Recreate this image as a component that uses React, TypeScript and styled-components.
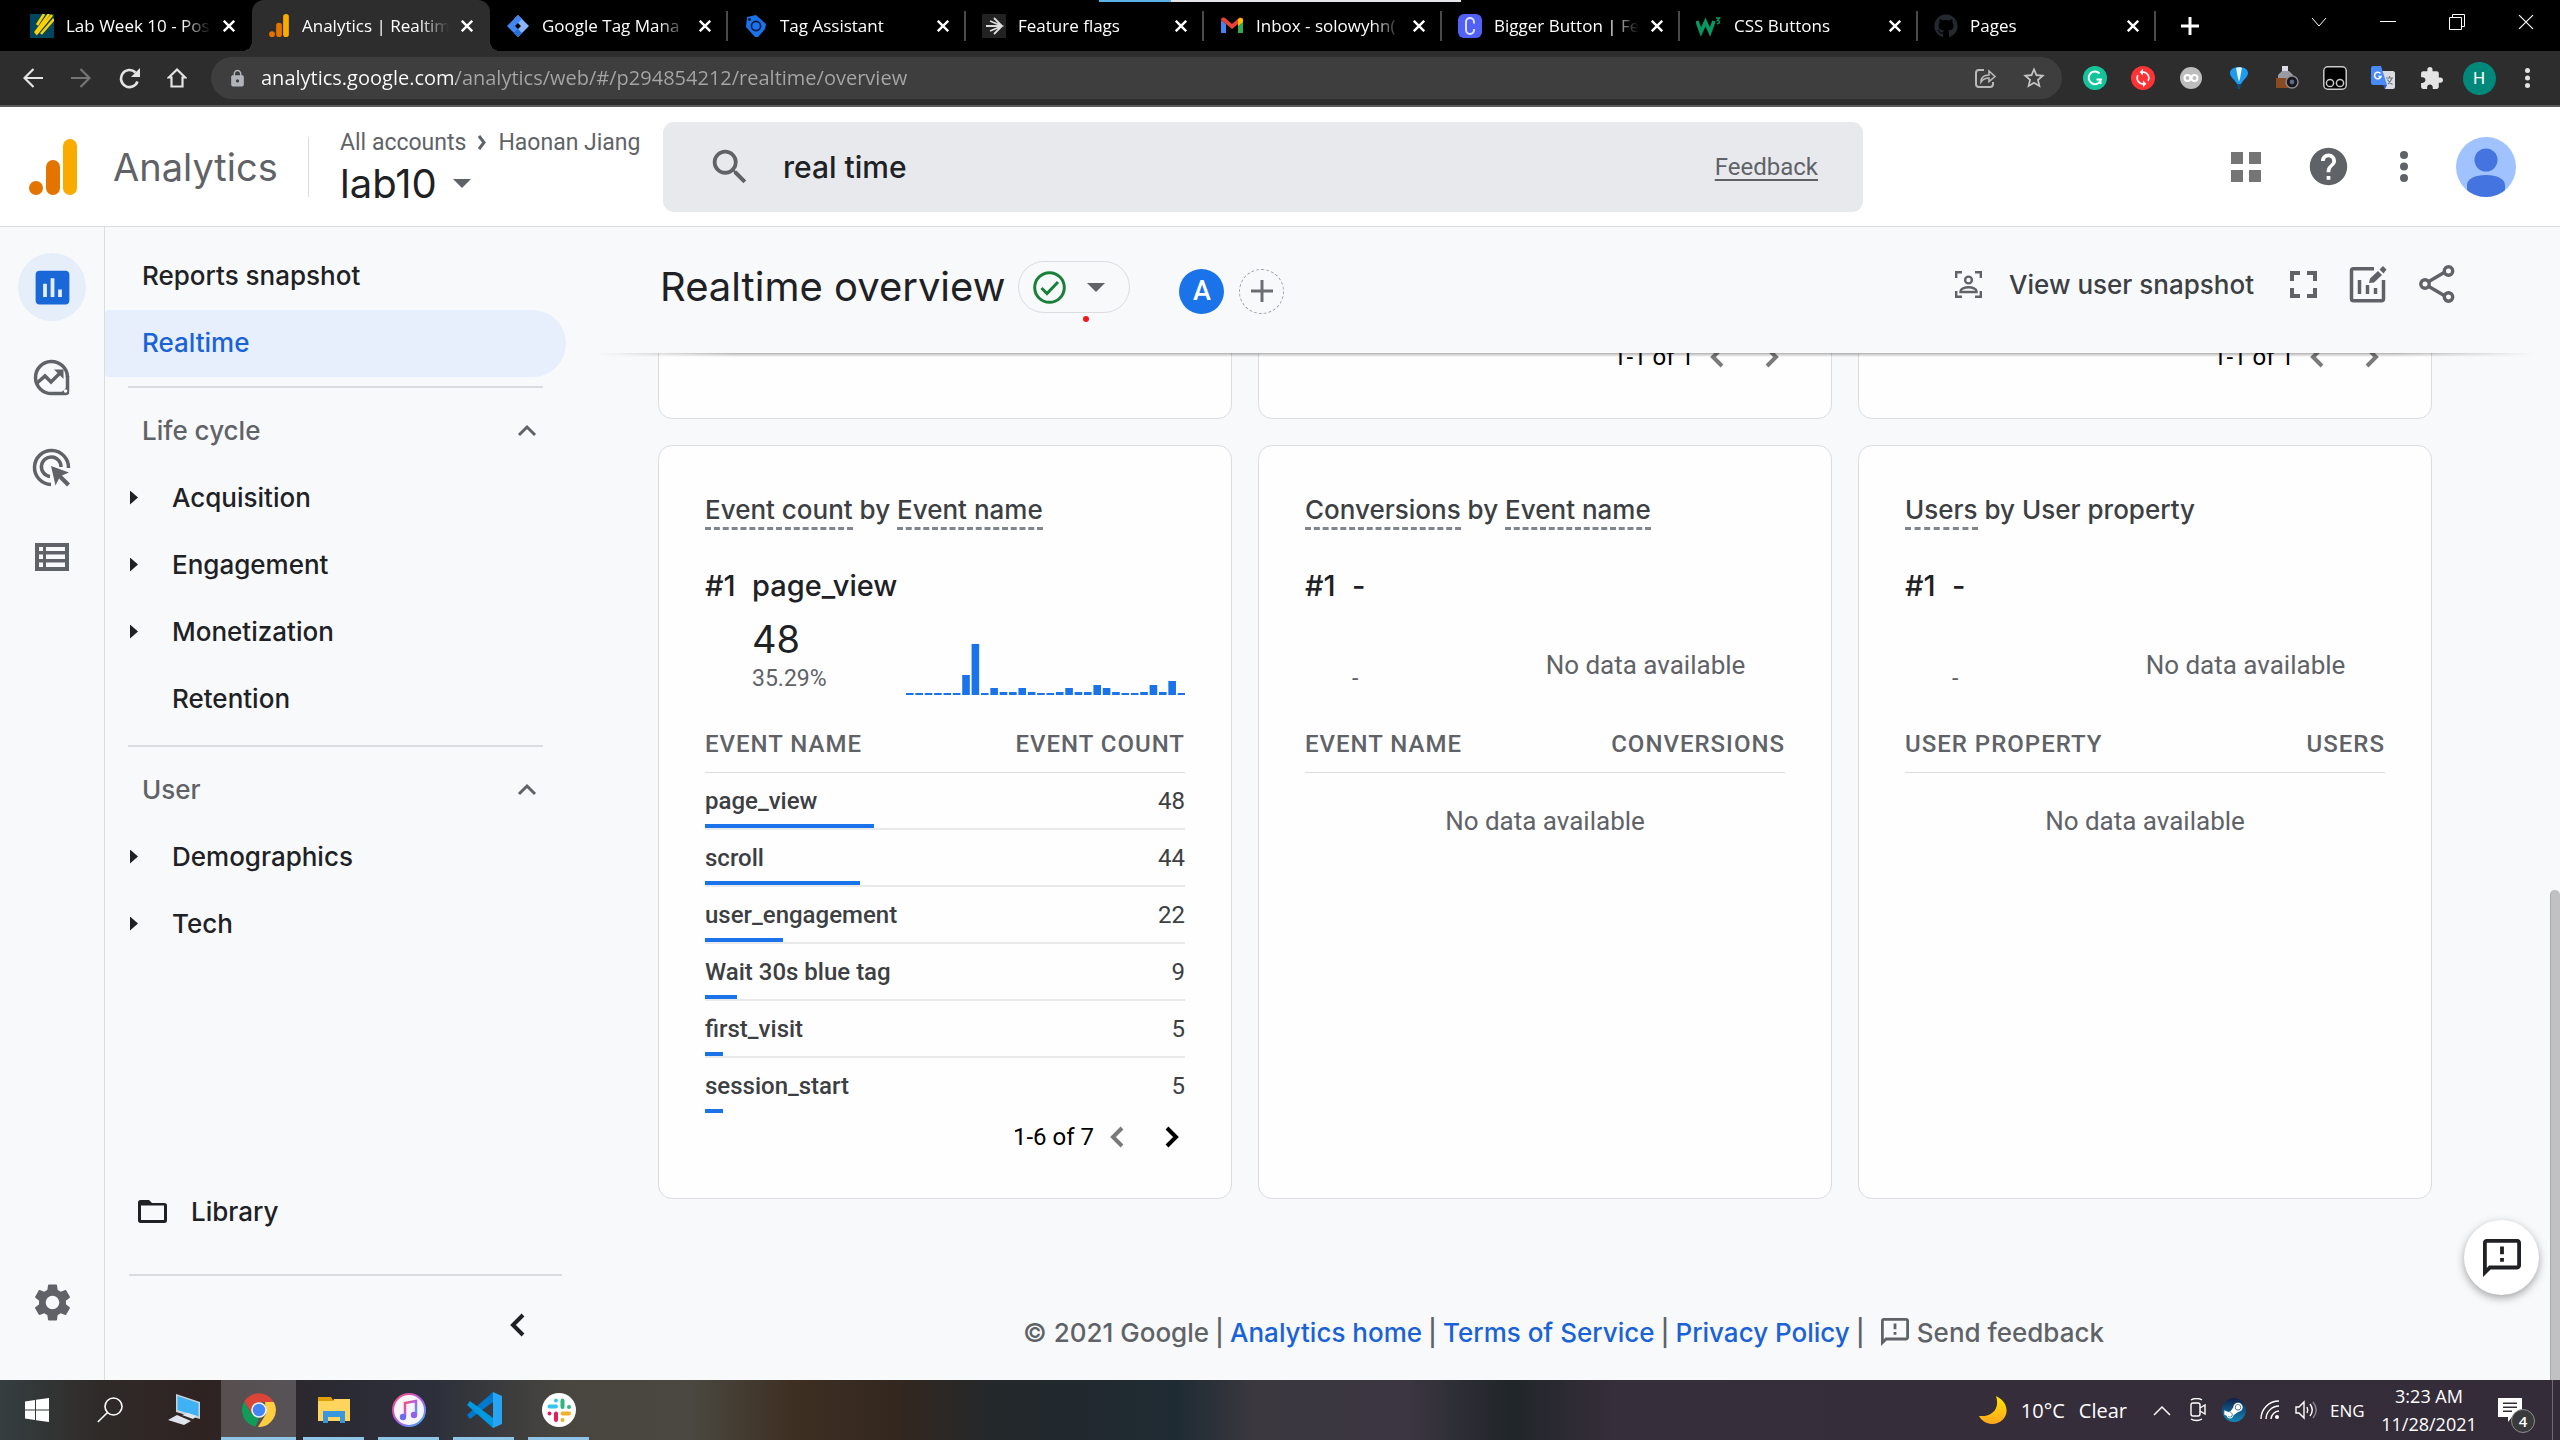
import React from "react";
import styled, { createGlobalStyle, css } from "styled-components";
import { MdSearch, MdHelp, MdSettings, MdInsertChart, MdLock, MdExtension, MdStarBorder, MdSync } from "react-icons/md";
import { FaGithub, FaSteamSymbol } from "react-icons/fa";

const display = `Inter, "Noto Sans", sans-serif`;
const body = `Roboto, "Noto Sans", sans-serif`;
const system = `"Open Sans", "Noto Sans", sans-serif`;

const GlobalStyle = createGlobalStyle`
  * { box-sizing: border-box; }
  body { margin: 0; overflow: hidden; background: #f8f9fb; }
  button, input { font: inherit; color: inherit; margin: 0; }
  button { border: 0; padding: 0; background: none; cursor: pointer; text-align: left; }
  svg { display: block; flex: none; }
  ul { list-style: none; margin: 0; padding: 0; }
`;

const Screen = styled.div`
  display: flex;
  flex-direction: column;
  height: 100vh;
  font-family: ${body};
  font-size: 24px;
  color: #202124;
`;

/* ---------- browser chrome ---------- */

const TabStrip = styled.div`
  position: relative;
  display: flex;
  flex: none;
  height: 51px;
  padding-left: 14px;
  background: #000;
  color: #fff;
  font-family: ${system};
  font-size: 17px;
`;

const Tab = styled.div<{ $active?: boolean; $divider?: boolean }>`
  position: relative;
  display: flex;
  align-items: center;
  gap: 12px;
  flex: 0 1 238px;
  min-width: 0;
  padding: 0 17px 0 16px;
  ${(p) =>
    p.$divider &&
    css`
      background: linear-gradient(#4a4a4a, #4a4a4a) right center / 2px 30px no-repeat;
    `}
  ${(p) =>
    p.$active &&
    css`
      background: #2d2d2d;
      border-radius: 12px 12px 0 0;
      &::before,
      &::after {
        content: "";
        position: absolute;
        bottom: 0;
        width: 10px;
        height: 10px;
      }
      &::before {
        left: -10px;
        background: radial-gradient(circle at 0 0, transparent 10px, #2d2d2d 10px);
      }
      &::after {
        right: -10px;
        background: radial-gradient(circle at 100% 0, transparent 10px, #2d2d2d 10px);
      }
    `}
`;

const TabTitle = styled.button`
  flex: 1;
  min-width: 0;
  white-space: nowrap;
  line-height: 30px;
  mask-image: linear-gradient(to right, #000 80%, transparent);
`;

const IconButton = styled.button`
  display: flex;
  align-items: center;
  justify-content: center;
  flex: none;
`;

const NewTab = styled(IconButton)`
  width: 68px;
`;

const WindowControls = styled.div`
  display: flex;
  height: 43px;
  margin-left: auto;
  button {
    width: 69px;
  }
`;

const LoadingHandle = styled.div`
  position: absolute;
  top: 0;
  left: 1099px;
  width: 362px;
  height: 2px;
  background: linear-gradient(to right, #5ab3e6 72px, #e4e6ea 72px);
`;

const Toolbar = styled.div`
  display: flex;
  align-items: center;
  flex: none;
  height: 56px;
  padding: 0 9px;
  background: #2d2d2d;
  border-bottom: 2px solid #5a5a5a;
  color: #e4e4e4;
`;

const ToolButton = styled(IconButton)`
  width: 48px;
  height: 42px;
`;

const AddressBar = styled.label`
  display: flex;
  align-items: center;
  flex: 1;
  height: 42px;
  margin: 0 9px 0 10px;
  padding: 0 4px 0 17px;
  border-radius: 21px;
  background: #3e3e3e;
`;

const UrlInput = styled.input`
  flex: 1;
  margin-left: 14px;
  padding: 0;
  border: 0;
  outline: 0;
  font-family: ${system};
  font-size: 20px;
  line-height: 30px;
  color: transparent;
  background: linear-gradient(to right, #fff 195px, #a6a6a6 195px);
  background-clip: text;
  -webkit-background-clip: text;
`;

const ProfileDot = styled.span`
  display: grid;
  place-items: center;
  width: 33px;
  height: 33px;
  border-radius: 50%;
  background: #00897b;
  color: #fff;
  font-size: 17px;
`;

/* ---------- analytics header ---------- */

const AppHeader = styled.header`
  display: flex;
  align-items: center;
  flex: none;
  height: 120px;
  padding: 0 44px 0 29px;
  background: #fff;
  border-bottom: 1px solid #dadce0;
`;

const Brand = styled.span`
  width: 195px;
  margin-left: 36px;
  font-family: ${display};
  font-size: 38px;
  color: #5f6368;
`;

const AccountPicker = styled.div`
  width: 355px;
  height: 60px;
  padding-left: 31px;
  border-left: 1px solid #dadce0;
  display: flex;
  flex-direction: column;
  justify-content: center;
`;

const Crumbs = styled.nav`
  display: flex;
  align-items: center;
  gap: 11px;
  font-size: 23px;
  line-height: 34px;
  color: #5f6368;
  white-space: nowrap;
`;

const PropertyButton = styled.button`
  display: flex;
  align-items: center;
  gap: 16px;
  font-family: ${display};
  font-size: 40px;
  line-height: 48px;
`;

const SearchBox = styled.label`
  display: flex;
  align-items: center;
  width: 1200px;
  height: 90px;
  padding: 0 45px 0 44px;
  border-radius: 11px;
  background: #e8e9ed;
  color: #5f6368;
`;

const SearchInput = styled.input`
  flex: 1;
  min-width: 0;
  margin-left: 30px;
  padding: 0;
  border: 0;
  outline: 0;
  background: none;
  font-family: ${display};
  font-size: 30px;
  font-weight: 500;
  color: #202124;
`;

const FeedbackLink = styled.a`
  color: #5f6368;
  text-underline-offset: 4px;
`;

const HeaderActions = styled.div`
  display: flex;
  align-items: center;
  margin-left: auto;
  color: #5f6368;
`;

const HelpButton = styled(IconButton)`
  margin: 0 49px 0 45px;
`;

const AvatarButton = styled(IconButton)`
  margin-left: 48px;
`;

/* ---------- navigation ---------- */

const Workspace = styled.div`
  position: relative;
  display: flex;
  flex: 1;
  min-height: 0;
  background: #f8f9fb;
`;

const Rail = styled.nav`
  display: flex;
  flex-direction: column;
  align-items: center;
  gap: 22px;
  width: 105px;
  padding: 26px 0 44px;
  border-right: 1px solid #dadce0;
  color: #5f6368;
`;

const RailButton = styled(IconButton)<{ $active?: boolean; $last?: boolean }>`
  width: 68px;
  height: 68px;
  border-radius: 50%;
  background: ${(p) => (p.$active ? "#e6eefa" : "none")};
  color: ${(p) => (p.$active ? "#1a68d8" : "inherit")};
  margin-top: ${(p) => (p.$last ? "auto" : 0)};
`;

const SideNav = styled.nav`
  display: flex;
  flex-direction: column;
  width: 462px;
  padding-top: 16px;
  font-family: ${display};
  font-size: 26px;
  font-weight: 500;
`;

const NavLink = styled.a<{ $selected?: boolean }>`
  display: flex;
  align-items: center;
  height: 67px;
  margin-right: 1px;
  padding: 0 0 3px 37px;
  border-radius: 4px 34px 34px 4px;
  text-decoration: none;
  color: ${(p) => (p.$selected ? "#1a63d6" : "#202124")};
  background: ${(p) => (p.$selected ? "#e8effc" : "none")};
`;

const NavRule = styled.hr<{ $wide?: boolean }>`
  width: ${(p) => (p.$wide ? "auto" : "415px")};
  margin: ${(p) => (p.$wide ? "29px 5px 0 24px" : "9px 0 9px 23px")};
  border: 0;
  border-top: 2px solid #dadce0;
`;

const SectionToggle = styled.button`
  display: flex;
  align-items: center;
  justify-content: space-between;
  height: 67px;
  padding: 0 30px 0 37px;
  color: #5f6368;
`;

const SectionList = styled.ul`
  padding-bottom: 4px;
`;

const SectionItem = styled.a`
  display: flex;
  align-items: center;
  height: 67px;
  padding-left: 25px;
  color: #202124;
  text-decoration: none;
`;

const Caret = styled.span<{ $hidden?: boolean }>`
  width: 8px;
  height: 14px;
  margin-right: 34px;
  background: ${(p) => (p.$hidden ? "none" : "#202124")};
  clip-path: polygon(0 0, 100% 50%, 0 100%);
`;

const NavFooter = styled.div`
  margin-top: auto;
`;

const LibraryLink = styled.a`
  display: flex;
  align-items: center;
  gap: 24px;
  height: 67px;
  padding-left: 33px;
  color: #202124;
  text-decoration: none;
`;

const CollapseRow = styled.div`
  display: flex;
  align-items: center;
  justify-content: flex-end;
  height: 104px;
  padding: 0 42px 6px 0;
`;

/* ---------- report ---------- */

const Main = styled.main`
  display: flex;
  flex-direction: column;
  flex: 1;
  min-width: 0;
`;

const ReportHeader = styled.div`
  position: relative;
  z-index: 1;
  display: flex;
  align-items: center;
  flex: none;
  height: 126px;
  padding: 0 105px 6px 93px;
  background: #f8f9fb;
  &::after {
    content: "";
    position: absolute;
    left: 30px;
    right: 26px;
    top: 100%;
    height: 4px;
    background: linear-gradient(rgba(0, 0, 0, 0.3), rgba(0, 0, 0, 0));
    mask-image: linear-gradient(to right, transparent, #000 140px, #000 calc(100% - 140px), transparent);
  }
`;

const ReportTitle = styled.h1`
  margin: 0 13px 0 0;
  font-family: ${display};
  font-size: 40px;
  font-weight: 400;
  line-height: 52px;
  white-space: nowrap;
`;

const StatusButton = styled.button`
  position: relative;
  display: flex;
  align-items: center;
  justify-content: space-between;
  width: 112px;
  height: 52px;
  padding: 0 24px 0 14px;
  border: 1px solid #dadce0;
  border-radius: 26px;
`;

const StatusMark = styled.span`
  position: absolute;
  left: 64px;
  top: 54px;
  width: 6px;
  height: 6px;
  border-radius: 50%;
  background: #f01818;
`;

const Comparisons = styled.div`
  display: flex;
  gap: 15px;
  margin: 8px 0 0 49px;
`;

const ComparisonChip = styled(IconButton)<{ $add?: boolean }>`
  width: 45px;
  height: 45px;
  border-radius: 50%;
  font-size: 27px;
  font-weight: 500;
  color: ${(p) => (p.$add ? "#6b6f73" : "#fff")};
  background: ${(p) => (p.$add ? "none" : "#1a73e8")};
  border: ${(p) => (p.$add ? "1px dashed #9aa0a6" : "0")};
`;

const ReportActions = styled.div`
  display: flex;
  align-items: center;
  gap: 32px;
  margin-left: auto;
  padding-bottom: 6px;
  color: #5f6368;
`;

const SnapshotButton = styled.button`
  display: flex;
  align-items: center;
  gap: 27px;
  margin-right: 4px;
  font-family: ${display};
  font-size: 26px;
  font-weight: 500;
  white-space: nowrap;
  span {
    color: #3c4043;
  }
`;

const CardRow = styled.div<{ $clipped?: boolean }>`
  display: grid;
  grid-template-columns: repeat(3, minmax(0, 1fr));
  gap: 26px;
  padding: 0 128px 0 91px;
  ${(p) =>
    p.$clipped &&
    css`
      align-items: end;
      align-content: end;
      height: 66px;
      margin-bottom: 26px;
      overflow: hidden;
    `}
`;

const Card = styled.section`
  display: flex;
  flex-direction: column;
  min-height: 126px;
  padding: 46px 46px 44px;
  border: 1px solid #dadce0;
  border-radius: 14px;
  background: #fefefe;
`;

const CardTitle = styled.h2`
  margin: 0 0 38px;
  font-family: ${display};
  font-size: 26px;
  font-weight: 500;
  line-height: 36px;
  color: #3c4043;
  white-space: nowrap;
`;

const Term = styled.span`
  padding-bottom: 2px;
  border-bottom: 3px dashed #80868b;
`;

const TopItem = styled.div`
  display: grid;
  grid-template-columns: 47px 1fr;
  font-family: ${display};
  font-size: 29px;
  font-weight: 500;
  line-height: 40px;
`;

const Hero = styled.div`
  display: flex;
  justify-content: space-between;
  align-items: flex-end;
  height: 89px;
  padding-left: 47px;
`;

const Metric = styled.div`
  font-family: ${display};
  font-size: 38px;
  line-height: 48px;
`;

const Share = styled.div`
  font-size: 23px;
  line-height: 32px;
  color: #5f6368;
`;

const HeroSide = styled.div`
  display: flex;
  justify-content: center;
  width: 279px;
`;

const Empty = styled.p<{ $hero?: boolean }>`
  margin: 0;
  font-size: 26px;
  line-height: ${(p) => (p.$hero ? "60px" : "94px")};
  text-align: center;
  color: #5f6368;
`;

const DataTable = styled.table`
  width: 100%;
  margin-top: 21px;
  border-collapse: separate;
  border-spacing: 0;
  table-layout: fixed;
  th {
    height: 57px;
    padding: 0;
    border-bottom: 1px solid #dadce0;
    font-weight: 500;
    letter-spacing: 1px;
    text-align: left;
    color: #5f6368;
    white-space: nowrap;
  }
  th:last-child,
  td:last-child {
    text-align: right;
  }
`;

const NameCol = styled.col`
  width: 60%;
`;

const Cell = styled.td<{ $strong?: boolean }>`
  height: 57px;
  padding: 6px 0 0;
  border-bottom: 2px solid #e8e9ea;
  vertical-align: top;
  line-height: 45px;
  color: #3c4043;
  font-weight: ${(p) => (p.$strong ? 500 : 400)};
  tr:last-child > & {
    border-color: transparent;
  }
`;

const Bar = styled.div`
  height: 4px;
  background: #1a73e8;
`;

const Pager = styled.div`
  display: flex;
  align-items: center;
  justify-content: flex-end;
  height: 39px;
  padding-top: 5px;
  margin-top: auto;
  color: #000;
  button {
    width: 26px;
    color: #000;
  }
  button:disabled {
    color: #7a7a7a;
  }
  button:first-of-type {
    margin: 0 29px 0 10px;
  }
`;

const Footer = styled.footer`
  display: flex;
  align-items: center;
  justify-content: center;
  flex: none;
  height: 180px;
  padding-top: 86px;
  gap: 6px;
  font-family: ${display};
  font-size: 26px;
  font-weight: 500;
  color: #5f6368;
  white-space: nowrap;
  a {
    color: #1a62d6;
    text-decoration: none;
  }
`;

const SendFeedback = styled.button`
  display: flex;
  align-items: center;
  gap: 8px;
  margin-left: 10px;
`;

const FloatingFeedback = styled(IconButton)`
  position: absolute;
  right: 21px;
  bottom: 85px;
  width: 75px;
  height: 75px;
  border-radius: 50%;
  background: #fff;
  box-shadow: 0 3px 9px rgba(0, 0, 0, 0.35);
`;

const ScrollThumb = styled.div`
  position: absolute;
  right: 0;
  bottom: 0;
  width: 10px;
  height: 490px;
  border-radius: 5px 5px 0 0;
  border-left: 1px solid #a9a9a9;
  background: #c1c1c3;
`;

/* ---------- taskbar ---------- */

const Taskbar = styled.div`
  position: relative;
  display: flex;
  flex: none;
  height: 60px;
  color: #fff;
  font-family: ${system};
  font-size: 17px;
  background: linear-gradient(
    to right,
    #353e40 0,
    #2f2a28 4%,
    #2f2322 8%,
    #2b2a33 13%,
    #2d303b 17%,
    #48463f 22%,
    #4a4840 27%,
    #3e2f22 31%,
    #33271f 35%,
    #23282b 39%,
    #1f2b33 46%,
    #3b3840 49%,
    #3b3641 55%,
    #20262a 59%,
    #362e3a 63%,
    #352c3a 100%
  );
`;

const TaskButton = styled(IconButton)<{ $running?: boolean; $active?: boolean; $narrow?: boolean }>`
  width: ${(p) => (p.$narrow ? "73px" : "75px")};
  border-top: 3px solid transparent;
  border-bottom: 3px solid transparent;
  background: ${(p) =>
    p.$active
      ? "linear-gradient(#8ec5e6, #8ec5e6) center bottom / 100% 3px no-repeat border-box, rgba(255,255,255,0.2) border-box"
      : p.$running
      ? "linear-gradient(#8ec5e6, #8ec5e6) center bottom / 61px 3px no-repeat border-box"
      : "none"};
`;

const Tray = styled.div`
  display: flex;
  align-items: center;
  margin-left: auto;
  padding-right: 25px;
`;

const Weather = styled.button`
  display: flex;
  align-items: center;
  gap: 14px;
  margin-right: 17px;
  font-size: 20px;
`;

const TrayButton = styled(IconButton)`
  width: 36px;
  height: 48px;
`;

const Clock = styled.time`
  width: 110px;
  margin: 0 14px 0 6px;
  text-align: center;
  font-size: 18px;
  line-height: 28px;
`;

const Language = styled.button`
  width: 38px;
  margin-left: 6px;
`;

const Notices = styled(IconButton)`
  position: relative;
  justify-content: flex-start;
  width: 37px;
  height: 48px;
`;

const NoticeCount = styled.span`
  position: absolute;
  right: 0;
  bottom: 1px;
  display: grid;
  place-items: center;
  width: 24px;
  height: 24px;
  border: 1px solid #8d8d8d;
  border-radius: 50%;
  background: #3a3a3c;
  font-size: 15px;
  font-weight: 600;
`;

const DesktopEdge = styled.div`
  position: absolute;
  right: 7px;
  top: 0;
  width: 1px;
  height: 100%;
  background: #6f6a74;
`;

/* ---------- drawings ---------- */

const Cross = ({ size = 12, width = 2.4 }: { size?: number; width?: number }) => (
  <svg width={size} height={size} viewBox="0 0 12 12" stroke="currentColor" strokeWidth={width} fill="none">
    <path d="M.8.8l10.4 10.4M11.2.8L.8 11.2" />
  </svg>
);

const Chevron = ({ dir, w = 14, h = 22, sw = 4 }: { dir: "left" | "right" | "up"; w?: number; h?: number; sw?: number }) => {
  const pts =
    dir === "left"
      ? `${w - 2},2 3,${h / 2} ${w - 2},${h - 2}`
      : dir === "right"
      ? `2,2 ${w - 3},${h / 2} 2,${h - 2}`
      : `2,${h - 2} ${w / 2},3 ${w - 2},${h - 2}`;
  return (
    <svg width={w} height={h} fill="none" stroke="currentColor" strokeWidth={sw}>
      <polyline points={pts} />
    </svg>
  );
};

const DownArrow = ({ w = 18 }: { w?: number }) => (
  <svg width={w} height={w / 2} viewBox="0 0 18 9" fill="#5f6368">
    <path d="M0 0h18L9 9z" />
  </svg>
);

const AnalyticsLogo = ({ w = 48, h = 56 }: { w?: number; h?: number }) => (
  <svg width={w} height={h} viewBox="0 0 48 56">
    <rect x="34" y="0" width="14" height="56" rx="7" fill="#f9ab00" />
    <rect x="17" y="21" width="14" height="35" rx="7" fill="#e37400" />
    <circle cx="7" cy="49" r="7" fill="#e37400" />
  </svg>
);

const PolyIcon = () => (
  <svg width="24" height="24" viewBox="0 0 24 24">
    <path fill="#00465f" d="M0 0h24v24H0z" />
    <path d="M7 11L14 0M5 19L19 0M6 20.500L22 1M11 20L24 5" stroke="#ffd100" strokeWidth="2.6" />
  </svg>
);

const TagManagerIcon = () => (
  <svg width="24" height="24" viewBox="0 0 24 24">
    <path fill="#8ab4f8" d="M12 1l11 11-11 11-4-4 7-7-7-7z" />
    <path fill="#4285f4" d="M12 1L1 12l7 7 4-4-3-3 7-7z" />
    <path fill="#246fdb" d="M8 19l4-4 4 4-4 4z" />
  </svg>
);

const TagAssistantIcon = () => (
  <svg width="24" height="24" viewBox="0 0 24 24">
    <path fill="#1a73e8" d="M3 3l9-2 10 9-1 5-7 8h-3L2 13z" />
    <circle cx="12" cy="12" r="4.600" fill="none" stroke="#06183a" strokeWidth="1.600" />
    <circle cx="5.500" cy="5.500" r="1.400" fill="#06183a" />
  </svg>
);

const FlagsIcon = () => (
  <svg width="24" height="24" viewBox="0 0 24 24" stroke="#ddd" strokeWidth="1.8" fill="none">
    <path fill="#222" stroke="none" d="M0 0h24v24H0z" />
    <path d="M4 12h16M12 4l8 8-8 8M8 7l12 5-12 5" />
  </svg>
);

const GmailIcon = () => (
  <svg width="24" height="24" viewBox="0 0 24 24">
    <path fill="#4285f4" d="M1 6v13h5v-9z" />
    <path fill="#34a853" d="M23 6v13h-5v-9z" />
    <path fill="#ea4335" d="M1 6c0-2 2-3 4-2l7 6 7-6c2-1 4 0 4 2l-5 4-6 5-6-5z" />
    <path fill="#fbbc04" d="M18 5c3-2 5-1 5 1v2l-5 4z" />
  </svg>
);

const CodeIcon = () => (
  <svg width="24" height="24" viewBox="0 0 24 24" fill="none">
    <rect width="24" height="24" rx="6" fill="#5161f5" />
    <path d="M16 9.500V8a4 4 0 0 0-8 0v8a4 4 0 0 0 8 0v-1" stroke="#dfe2ff" strokeWidth="2" />
  </svg>
);

const SchoolsIcon = () => (
  <svg width="26" height="24" viewBox="0 0 26 24" fill="none" stroke="#059862">
    <path d="M1 7l4 11 4.500-10 4.500 10 4-11" strokeWidth="3.600" />
    <path d="M20 4h3.500l-2 2.500c3 0 2.500 3.500-.5 3.200" strokeWidth="1.500" />
  </svg>
);

const Avatar = () => (
  <svg width="60" height="60" viewBox="0 0 60 60">
    <defs>
      <clipPath id="avatar-clip">
        <circle cx="30" cy="30" r="30" />
      </clipPath>
    </defs>
    <circle cx="30" cy="30" r="30" fill="#a0c3ff" />
    <g clipPath="url(#avatar-clip)" fill="#4374e0">
      <circle cx="30" cy="23" r="11.500" />
      <path d="M11 60V48c0-6 8-10 19-10s19 4 19 10v12z" />
    </g>
  </svg>
);

const Apps = () => (
  <svg width="30" height="30" viewBox="0 0 30 30" fill="#757575">
    <path d="M0 0h12v12H0zM18 0h12v12H18zM0 18h12v12H0zM18 18h12v12H18z" />
  </svg>
);

const Dots = ({ r = 4, h = 31 }: { r?: number; h?: number }) => (
  <svg width={r * 2} height={h} fill="currentColor">
    <circle cx={r} cy={r} r={r} />
    <circle cx={r} cy={h / 2} r={r} />
    <circle cx={r} cy={h - r} r={r} />
  </svg>
);

const ExploreIcon = () => (
  <svg width="38" height="38" viewBox="0 0 38 38" fill="none" stroke="currentColor">
    <path d="M34.500 19A16 16 0 1 0 19 35.500" strokeWidth="3.500" />
    <path d="M34.500 18v15.500c0 1-.8 2-2 2H19" strokeWidth="3.500" />
    <path d="M36 24v12H24c6-2 10-6 12-12z" fill="currentColor" stroke="none" />
    <circle cx="32.500" cy="33" r="1.800" fill="#fff" stroke="none" />
    <path d="M4 25l8-7 6 6 9-9" strokeWidth="3.500" />
    <path d="M21 11.500h9.500V21z" fill="currentColor" stroke="none" />
  </svg>
);

const AdvertisingIcon = () => (
  <svg width="40" height="40" viewBox="0 0 40 40" fill="none" stroke="currentColor" strokeWidth="3.500">
    <path d="M19 37.500A17 17 0 1 1 36.500 21" />
    <path d="M18 29.500A9.800 9.800 0 1 1 29 20" />
    <path d="M19 19l18 6.500-7 3 8 8-3 3-8-8-3.500 7z" fill="currentColor" stroke="none" />
  </svg>
);

const ConfigureIcon = () => (
  <svg width="34" height="28" viewBox="0 0 34 28">
    <path
      fill="currentColor"
      fillRule="evenodd"
      d="M0 0h34v28H0zM4 4v4h4V4zM11 4v4h19V4zM4 11.500v4.500h4v-4.500zM11 11.500v4.500h19v-4.500zM4 19.500V24h4v-4.500zM11 19.500V24h19v-4.500z"
    />
  </svg>
);

const FolderIcon = () => (
  <svg width="29" height="23" viewBox="0 0 29 23">
    <path
      fill="#202124"
      fillRule="evenodd"
      d="M2.500 0H11l3 3h12.500C28 3 29 4 29 5.500v15c0 1.500-1 2.500-2.500 2.500h-24C1 23 0 22 0 20.500v-18C0 1 1 0 2.500 0zM3 5.500V20h23V5.500z"
    />
  </svg>
);

const CheckIcon = () => (
  <svg width="33" height="33" viewBox="0 0 33 33" fill="none" stroke="#188038" strokeWidth="3">
    <circle cx="16.500" cy="16.500" r="14.800" />
    <path d="M8.500 17l5.500 5.500L25 11" />
  </svg>
);

const PlusIcon = ({ s = 22, w = 3 }: { s?: number; w?: number }) => (
  <svg width={s} height={s} viewBox="0 0 22 22" fill="none" stroke="currentColor" strokeWidth={w}>
    <path d="M11 0v22M0 11h22" />
  </svg>
);

const SnapshotIcon = () => (
  <svg width="27" height="27" viewBox="0 0 27 27" fill="none" stroke="currentColor" strokeWidth="2.400">
    <path d="M1.200 7V1.200H7M20 1.200h5.800V7M25.800 20v5.800H20M7 25.800H1.200V20" />
    <circle cx="13.500" cy="9" r="3.400" />
    <path d="M5.500 21v-1c0-2 4-3.800 8-3.800s8 1.800 8 3.800v1z" />
  </svg>
);

const FullscreenIcon = () => (
  <svg width="27" height="27" viewBox="0 0 27 27" fill="none" stroke="currentColor" strokeWidth="4">
    <path d="M2 10V2h8M17 2h8v8M25 17v8h-8M10 25H2v-8" />
  </svg>
);

const CustomizeIcon = () => (
  <svg width="38" height="38" viewBox="0 0 38 38" fill="none" stroke="currentColor" strokeWidth="3.500">
    <path d="M25 3.800H4.500a2 2 0 0 0-2 2v28a2 2 0 0 0 2 2h28a2 2 0 0 0 2-2V15" />
    <path d="M10.500 15v14M18.500 20v9M26.500 23v6" />
    <path d="M20 18l1-4.500L29 6l4 4-8 7.500zM30.500 4.500L34 1l3.500 3.500L34.500 8.500z" fill="currentColor" stroke="none" />
  </svg>
);

const ShareIcon = () => (
  <svg width="36" height="38" viewBox="0 0 36 38" fill="none" stroke="currentColor" strokeWidth="3.400">
    <path d="M9 17L26 7M9 21l17 10" />
    <circle cx="6" cy="19" r="4.200" />
    <circle cx="29.500" cy="6" r="4.200" />
    <circle cx="29.500" cy="32" r="4.200" />
  </svg>
);

const FeedbackIcon = ({ s }: { s: number }) => (
  <svg width={s} height={s} viewBox="0 0 20 20" fill="currentColor">
    <path d="M18 0H2C.9 0 0 .9 0 2v18l4-4h14c1.100 0 2-.9 2-2V2c0-1.100-.9-2-2-2zm0 14H3.200L2 15.200V2h16v12zM9 10h2v2H9zM9 4h2v4H9z" />
  </svg>
);

const bars = [2, 2, 2, 2, 2, 2, 20, 51, 2, 7, 3, 3, 7, 3, 2, 2, 3, 7, 3, 3, 10, 7, 3, 2, 2, 3, 10, 3, 14, 2];

const Sparkline = () => (
  <svg width="279" height="54" fill="#1a73e8" role="img" aria-label="Events per minute">
    {bars.map((v, i) => (
      <rect key={i} x={i * 9.37} y={54 - v} width="7.6" height={v} />
    ))}
  </svg>
);

/* ---------- data ---------- */

const tabs = [
  { title: "Lab Week 10 - Pos", icon: <PolyIcon /> },
  { title: "Analytics | Realtim", icon: <AnalyticsLogo w={22} h={23} />, active: true },
  { title: "Google Tag Mana", icon: <TagManagerIcon />, divider: true },
  { title: "Tag Assistant", icon: <TagAssistantIcon />, divider: true },
  { title: "Feature flags", icon: <FlagsIcon />, divider: true },
  { title: "Inbox - solowyhn(", icon: <GmailIcon />, divider: true },
  { title: "Bigger Button | Fe", icon: <CodeIcon />, divider: true },
  { title: "CSS Buttons", icon: <SchoolsIcon />, divider: true },
  { title: "Pages", icon: <FaGithub size={24} color="#24292f" />, divider: true },
];

const sections = [
  {
    name: "Life cycle",
    items: [
      { name: "Acquisition", open: true },
      { name: "Engagement", open: true },
      { name: "Monetization", open: true },
      { name: "Retention", open: false },
    ],
  },
  {
    name: "User",
    items: [
      { name: "Demographics", open: true },
      { name: "Tech", open: true },
    ],
  },
];

const events = [
  { name: "page_view", count: 48 },
  { name: "scroll", count: 44 },
  { name: "user_engagement", count: 22 },
  { name: "Wait 30s blue tag", count: 9 },
  { name: "first_visit", count: 5 },
  { name: "session_start", count: 5 },
];
const totalEvents = 136;

const extensions = [
  {
    name: "Grammarly",
    icon: (
      <svg width="24" height="24" viewBox="0 0 24 24" fill="none" stroke="#fff" strokeWidth="2">
        <circle cx="12" cy="12" r="12" fill="#15c39a" stroke="none" />
        <path d="M16.500 7.500a6.300 6.300 0 1 0 1.500 6h-4.500M17.500 18v-4.500" />
      </svg>
    ),
  },
  {
    name: "Sync",
    icon: (
      <svg width="24" height="24" viewBox="0 0 24 24">
        <circle cx="12" cy="12" r="12" fill="#f33" />
        <g transform="translate(2 2)" stroke="#fff" strokeWidth="1.500">
          <MdSync size={20} color="#fff" />
        </g>
      </svg>
    ),
  },
  {
    name: "Infinity",
    icon: (
      <svg width="22" height="22" viewBox="0 0 22 22" fill="none" stroke="#fff" strokeWidth="2">
        <circle cx="11" cy="11" r="11" fill="#bdbdbd" stroke="none" />
        <circle cx="7.500" cy="11" r="3" />
        <circle cx="14.500" cy="11" r="3" />
      </svg>
    ),
  },
  {
    name: "Balloon",
    icon: (
      <svg width="20" height="22" viewBox="0 0 20 22">
        <path fill="#1d9bf0" d="M1 6c0-8 18-8 18 0 0 4-5 7-7 11H8C6 13 1 10 1 6z" />
        <path fill="#e6f5ff" d="M7 1c2-1 5-1 6 0-1 3-1 8-3 14-2-6-2-10-3-14z" />
        <path fill="#0d4f86" d="M8 17h4l-1 5H9z" />
      </svg>
    ),
  },
  {
    name: "Camera",
    icon: (
      <svg width="24" height="24" viewBox="0 0 24 24">
        <path fill="#dcdce4" d="M7 0h6v5H7z" />
        <path fill="#9a9aa4" d="M3 9l4-4h7l4 4v3H3z" />
        <path fill="#8c4a22" d="M1 12h17v10H1z" />
        <circle cx="17" cy="16" r="6" fill="#15151a" stroke="#8a8a92" strokeWidth="1.500" />
        <circle cx="17" cy="16" r="2.400" fill="#5a6a88" />
      </svg>
    ),
  },
  {
    name: "Tampermonkey",
    icon: (
      <svg width="24" height="24" viewBox="0 0 24 24" stroke="#c9c9c9" strokeWidth="1.500">
        <rect x=".8" y=".8" width="22.400" height="22.400" rx="4" fill="#000" />
        <circle cx="7" cy="17" r="3.600" fill="none" />
        <circle cx="17" cy="17" r="3.600" fill="none" />
      </svg>
    ),
  },
  {
    name: "Translate",
    icon: (
      <svg width="24" height="24" viewBox="0 0 24 24" fill="none">
        <path d="M10 5h12c1 0 2 1 2 2v14c0 1-1 2-2 2h-8z" fill="#dadce0" />
        <path d="M2 0h8l6 19H2c-1 0-2-1-2-2V2C0 1 1 0 2 0z" fill="#4a8af4" />
        <path d="M12 19h4l-2 4z" fill="#2a56c6" />
        <path d="M9.500 7.500A3.300 3.300 0 1 0 10 10.500H7.500" stroke="#fff" strokeWidth="1.500" />
        <path d="M15 12h7M18.500 10v2M21 12c-1 3-3 5-4 6M16.500 13.500c1 2 3 4 5 5" stroke="#6b7f8c" strokeWidth="1.200" />
      </svg>
    ),
  },
  { name: "Extensions", icon: <MdExtension size={25} /> },
];

const apps = [
  {
    name: "This PC",
    icon: (
      <svg width="32" height="32" viewBox="0 0 32 32">
        <path fill="#c8d4dc" d="M8 0l24 8v17L8 18z" />
        <path fill="#3fb2f5" d="M9.500 2L30.500 9v13.500L9.500 16z" />
        <path fill="#dfe5ea" d="M0 26l9-5 14 6-7 4zM14 21l6-2 9 3-4 3z" />
      </svg>
    ),
  },
  {
    name: "Chrome",
    active: true,
    icon: (
      <svg width="34" height="34" viewBox="0 0 34 34">
        <path fill="#db4437" d="M2.300 8.500L10 21l7-12h14.700a17 17 0 0 0-29.400-.5z" />
        <path fill="#0f9d58" d="M2.300 8.500L9.800 21.200 17 25l-3.500 8.700A17 17 0 0 1 2.300 8.500z" />
        <path fill="#ffcd40" d="M31.800 9A17 17 0 0 1 16 34l8-13-1-12z" />
        <circle cx="17" cy="17" r="7.800" fill="#f1f1f1" />
        <circle cx="17" cy="17" r="6.200" fill="#4285f4" />
      </svg>
    ),
  },
  {
    name: "File Explorer",
    running: true,
    icon: (
      <svg width="32" height="28" viewBox="0 0 32 28">
        <path fill="#e0a000" d="M0 1h13l2 3v3H0z" />
        <path fill="#ffd55e" d="M0 5h15l1-2h16v22H0z" />
        <path fill="#3a96dd" d="M5 15h22v12h-5v-6H10v6H5z" />
      </svg>
    ),
  },
  {
    name: "iTunes",
    running: true,
    icon: (
      <svg width="34" height="34" viewBox="0 0 34 34" fill="none">
        <defs>
          <linearGradient id="tunes" x1="0" y1="0" x2="1" y2="1">
            <stop offset="0" stopColor="#fa4e6a" />
            <stop offset=".5" stopColor="#b45cf0" />
            <stop offset="1" stopColor="#30b8f8" />
          </linearGradient>
        </defs>
        <circle cx="17" cy="17" r="16" fill="#f8f5fa" stroke="url(#tunes)" strokeWidth="2" />
        <path d="M13 23V10l11-2v13" stroke="url(#tunes)" strokeWidth="2.500" />
        <circle cx="11" cy="24" r="3.200" fill="#6a6cf0" />
        <circle cx="22" cy="22" r="3.200" fill="#8f62e8" />
      </svg>
    ),
  },
  {
    name: "Visual Studio Code",
    running: true,
    icon: (
      <svg width="36" height="36" viewBox="0 0 36 36">
        <path fill="#0079cc" d="M27 0L1 23l3 4 23-17z" />
        <path fill="#0098e0" d="M27 36L1 13l3-4 23 17z" />
        <path fill="#27a5f2" d="M27 0l9 4v28l-9 4z" />
      </svg>
    ),
  },
  {
    name: "Slack",
    running: true,
    icon: (
      <svg width="34" height="34" viewBox="0 0 34 34" strokeWidth="4" strokeLinecap="round">
        <circle cx="17" cy="17" r="17" fill="#fff" />
        <path d="M14 7.500v0M7.500 13.500h6.500" stroke="#36c5f0" />
        <path d="M20.500 7.500V14M27 14v0" stroke="#2eb67d" />
        <path d="M20.500 20.500H27M20.500 27v0" stroke="#ecb22e" />
        <path d="M14 20.500V27M7.500 20.500v0" stroke="#e01e5a" />
      </svg>
    ),
  },
];

/* ---------- composition ---------- */

const PageControls = ({ label, more }: { label: string; more?: boolean }) => (
  <Pager>
    <span>{label}</span>
    <IconButton disabled aria-label="Previous page">
      <Chevron dir="left" />
    </IconButton>
    <IconButton disabled={!more} aria-label="Next page">
      <Chevron dir="right" />
    </IconButton>
  </Pager>
);

const EmptyCard = ({ title, name, value }: { title: React.ReactNode; name: string; value: string }) => (
  <Card>
    <CardTitle>{title}</CardTitle>
    <TopItem>
      <span>#1</span>
      <span>-</span>
    </TopItem>
    <Hero>
      <Share>-</Share>
      <HeroSide>
        <Empty $hero>No data available</Empty>
      </HeroSide>
    </Hero>
    <DataTable>
      <thead>
        <tr>
          <th>{name}</th>
          <th>{value}</th>
        </tr>
      </thead>
      <tbody>
        <tr>
          <td colSpan={2}>
            <Empty>No data available</Empty>
          </td>
        </tr>
      </tbody>
    </DataTable>
  </Card>
);

const BrowserChrome = () => (
  <>
    <TabStrip>
      {tabs.map((t) => (
        <Tab key={t.title} $active={t.active} $divider={t.divider}>
          {t.icon}
          <TabTitle>{t.title}</TabTitle>
          <IconButton aria-label="Close tab">
            <Cross />
          </IconButton>
        </Tab>
      ))}
      <NewTab aria-label="New tab">
        <PlusIcon s={18} w={3.6} />
      </NewTab>
      <WindowControls>
        <IconButton aria-label="Search tabs">
          <svg width="16" height="10" fill="none" stroke="#fff">
            <path d="M1 1l7 8 7-8" />
          </svg>
        </IconButton>
        <IconButton aria-label="Minimize">
          <svg width="16" height="2" fill="#fff">
            <path d="M0 0h16v1H0z" />
          </svg>
        </IconButton>
        <IconButton aria-label="Restore">
          <svg width="16" height="16" fill="none" stroke="#fff">
            <path d="M.5 3.500h12v12H.5zM3.500 3.500v-3h12v12h-3" />
          </svg>
        </IconButton>
        <IconButton aria-label="Close">
          <Cross size={16} width={0.9} />
        </IconButton>
      </WindowControls>
      <LoadingHandle />
    </TabStrip>
    <Toolbar>
      <ToolButton aria-label="Back">
        <svg width="20" height="20" fill="none" stroke="currentColor" strokeWidth="2.200">
          <path d="M20 10H2M10.500 1L1.500 10l9 9" />
        </svg>
      </ToolButton>
      <ToolButton aria-label="Forward">
        <svg width="20" height="20" fill="none" stroke="#757575" strokeWidth="2.200">
          <path d="M0 10h18M9.500 1l9 9-9 9" />
        </svg>
      </ToolButton>
      <ToolButton aria-label="Reload">
        <svg width="21" height="21" fill="none" stroke="currentColor" strokeWidth="2.600">
          <path d="M18.500 13.500A8.500 8.500 0 1 1 16.500 4.500" />
          <path d="M21 0v9h-9z" fill="currentColor" stroke="none" />
        </svg>
      </ToolButton>
      <ToolButton aria-label="Home">
        <svg width="20" height="20" fill="none" stroke="currentColor" strokeWidth="2.200">
          <path d="M10 1.500L1.800 9.500H4.500v9h11v-9h2.700z" />
        </svg>
      </ToolButton>
      <AddressBar>
        <MdLock size={19} color="#b0b3b8" />
        <UrlInput
          aria-label="Address"
          defaultValue="analytics.google.com/analytics/web/#/p294854212/realtime/overview"
        />
        <ToolButton aria-label="Share this page">
          <svg width="22" height="20" fill="none" stroke="#b8b8b8" strokeWidth="2">
            <path d="M9 2H4a3 3 0 0 0-3 3v11a3 3 0 0 0 3 3h11a3 3 0 0 0 3-3v-2" />
            <path d="M6 14c0-5 3-7 8-7V3l6 5.500-6 5V10c-4 0-6 1-8 4z" strokeWidth="1.600" />
          </svg>
        </ToolButton>
        <ToolButton aria-label="Bookmark">
          <MdStarBorder size={26} color="#c4c4c4" />
        </ToolButton>
      </AddressBar>
      {extensions.map((e) => (
        <ToolButton key={e.name} aria-label={e.name}>
          {e.icon}
        </ToolButton>
      ))}
      <ToolButton>
        <ProfileDot>H</ProfileDot>
      </ToolButton>
      <ToolButton aria-label="Menu">
        <Dots r={2.5} h={20} />
      </ToolButton>
    </Toolbar>
  </>
);

const Header = () => (
  <AppHeader>
    <AnalyticsLogo />
    <Brand>Analytics</Brand>
    <AccountPicker>
      <Crumbs>
        <span>All accounts</span>
        <Chevron dir="right" w={10} h={17} sw={3} />
        <span>Haonan Jiang</span>
      </Crumbs>
      <PropertyButton>
        lab10
        <DownArrow />
      </PropertyButton>
    </AccountPicker>
    <SearchBox>
      <MdSearch size={46} />
      <SearchInput type="text" aria-label="Search" defaultValue="real time" />
      <FeedbackLink href="#feedback">Feedback</FeedbackLink>
    </SearchBox>
    <HeaderActions>
      <IconButton aria-label="Apps">
        <Apps />
      </IconButton>
      <HelpButton aria-label="Help">
        <MdHelp size={45} />
      </HelpButton>
      <IconButton aria-label="More">
        <Dots />
      </IconButton>
      <AvatarButton aria-label="Account">
        <Avatar />
      </AvatarButton>
    </HeaderActions>
  </AppHeader>
);

const Navigation = () => (
  <>
    <Rail>
      <RailButton $active aria-label="Reports">
        <MdInsertChart size={45} />
      </RailButton>
      <RailButton aria-label="Explore">
        <ExploreIcon />
      </RailButton>
      <RailButton aria-label="Advertising">
        <AdvertisingIcon />
      </RailButton>
      <RailButton aria-label="Configure">
        <ConfigureIcon />
      </RailButton>
      <RailButton $last aria-label="Admin">
        <MdSettings size={45} />
      </RailButton>
    </Rail>
    <SideNav>
      <NavLink href="#snapshot">Reports snapshot</NavLink>
      <NavLink href="#realtime" $selected>
        Realtime
      </NavLink>
      {sections.map((s) => (
        <React.Fragment key={s.name}>
          <NavRule />
          <SectionToggle>
            {s.name}
            <Chevron dir="up" w={20} h={13} sw={3} />
          </SectionToggle>
          <SectionList>
            {s.items.map((i) => (
              <li key={i.name}>
                <SectionItem href={`#${i.name}`}>
                  <Caret $hidden={!i.open} />
                  {i.name}
                </SectionItem>
              </li>
            ))}
          </SectionList>
        </React.Fragment>
      ))}
      <NavFooter>
        <LibraryLink href="#library">
          <FolderIcon />
          Library
        </LibraryLink>
        <NavRule $wide />
        <CollapseRow>
          <IconButton aria-label="Collapse navigation">
            <Chevron dir="left" w={15} h={24} />
          </IconButton>
        </CollapseRow>
      </NavFooter>
    </SideNav>
  </>
);

const Report = () => (
  <Main>
    <ReportHeader>
      <ReportTitle>Realtime overview</ReportTitle>
      <StatusButton aria-label="Data quality">
        <CheckIcon />
        <DownArrow />
        <StatusMark />
      </StatusButton>
      <Comparisons>
        <ComparisonChip>A</ComparisonChip>
        <ComparisonChip $add aria-label="Add comparison">
          <PlusIcon />
        </ComparisonChip>
      </Comparisons>
      <ReportActions>
        <SnapshotButton>
          <SnapshotIcon />
          <span>View user snapshot</span>
        </SnapshotButton>
        <IconButton aria-label="Full screen">
          <FullscreenIcon />
        </IconButton>
        <IconButton aria-label="Customize report">
          <CustomizeIcon />
        </IconButton>
        <IconButton aria-label="Share report">
          <ShareIcon />
        </IconButton>
      </ReportActions>
    </ReportHeader>
    <CardRow $clipped>
      <Card />
      <Card>
        <PageControls label="1-1 of 1" />
      </Card>
      <Card>
        <PageControls label="1-1 of 1" />
      </Card>
    </CardRow>
    <CardRow>
      <Card>
        <CardTitle>
          <Term>Event count</Term> by <Term>Event name</Term>
        </CardTitle>
        <TopItem>
          <span>#1</span>
          <span>page_view</span>
        </TopItem>
        <Hero>
          <div>
            <Metric>48</Metric>
            <Share>35.29%</Share>
          </div>
          <Sparkline />
        </Hero>
        <DataTable>
          <colgroup>
            <NameCol />
            <col />
          </colgroup>
          <thead>
            <tr>
              <th>EVENT NAME</th>
              <th>EVENT COUNT</th>
            </tr>
          </thead>
          <tbody>
            {events.map((e) => (
              <tr key={e.name}>
                <Cell $strong>
                  {e.name}
                  <Bar style={{ width: `${(e.count / totalEvents / 0.6) * 100}%` }} />
                </Cell>
                <Cell>{e.count}</Cell>
              </tr>
            ))}
          </tbody>
        </DataTable>
        <PageControls label="1-6 of 7" more />
      </Card>
      <EmptyCard
        title={
          <>
            <Term>Conversions</Term> by <Term>Event name</Term>
          </>
        }
        name="EVENT NAME"
        value="CONVERSIONS"
      />
      <EmptyCard
        title={
          <>
            <Term>Users</Term> by User property
          </>
        }
        name="USER PROPERTY"
        value="USERS"
      />
    </CardRow>
    <Footer>
      <span>© 2021 Google</span>|<a href="#home">Analytics home</a>|<a href="#terms">Terms of Service</a>|
      <a href="#privacy">Privacy Policy</a>|
      <SendFeedback>
        <FeedbackIcon s={28} />
        Send feedback
      </SendFeedback>
    </Footer>
  </Main>
);

const SystemTaskbar = () => (
  <Taskbar>
    <TaskButton $narrow aria-label="Start">
      <svg width="24" height="24" viewBox="0 0 24 24" fill="#fff">
        <path d="M0 3.500L10 2v9.500H0zM11 1.800L24 0v11.500H11zM0 12.500h10V22L0 20.500zM11 12.500h13V24l-13-1.800z" />
      </svg>
    </TaskButton>
    <TaskButton $narrow aria-label="Search">
      <svg width="26" height="26" fill="none" stroke="#fff" strokeWidth="1.600">
        <circle cx="16.500" cy="9.500" r="8.500" />
        <path d="M10.500 15.500L.8 25" />
      </svg>
    </TaskButton>
    {apps.map((a) => (
      <TaskButton key={a.name} $running={a.running} $active={a.active} aria-label={a.name}>
        {a.icon}
      </TaskButton>
    ))}
    <Tray>
      <Weather>
        <svg width="28" height="28" viewBox="0 0 28 28">
          <defs>
            <linearGradient id="moon" x1="0" y1="0" x2="0" y2="1">
              <stop offset="0" stopColor="#ffe600" />
              <stop offset="1" stopColor="#ffa51f" />
            </linearGradient>
          </defs>
          <path fill="url(#moon)" d="M17 0c17 8 12 28-4 28C7 28 2 24 0 20c14 1 21-8 17-20z" />
        </svg>
        <span>10°C</span>
        <span>Clear</span>
      </Weather>
      <TrayButton aria-label="Show hidden icons">
        <svg width="18" height="11" fill="none" stroke="#fff" strokeWidth="1.500">
          <path d="M1 10l8-8 8 8" />
        </svg>
      </TrayButton>
      <TrayButton aria-label="Meet Now">
        <svg width="18" height="24" fill="none" stroke="#fff" strokeWidth="1.400">
          <rect x="2" y="5" width="9" height="13" rx="2" />
          <path d="M11 10l5-3v9l-5-3M2 2c3-2 8-2 11 0M2 21c3 2 8 2 11 0" />
        </svg>
      </TrayButton>
      <TrayButton aria-label="Steam">
        <svg width="24" height="24" viewBox="0 0 24 24">
          <defs>
            <linearGradient id="steam" x1="0" y1="0" x2="0" y2="1">
              <stop offset="0" stopColor="#10204a" />
              <stop offset="1" stopColor="#1387b8" />
            </linearGradient>
          </defs>
          <circle cx="12" cy="12" r="12" fill="url(#steam)" />
          <g transform="translate(1 2)">
            <FaSteamSymbol size={21} color="#fff" />
          </g>
        </svg>
      </TrayButton>
      <TrayButton aria-label="Network">
        <svg width="20" height="20" fill="none" stroke="#fff" strokeWidth="1.400">
          <path d="M1 19C1 9 9 1 19 1M6 19C6 12 12 6 19 6M11 19c0-4 4-8 8-8" />
          <circle cx="17" cy="17" r="2" fill="#fff" stroke="none" />
        </svg>
      </TrayButton>
      <TrayButton aria-label="Volume">
        <svg width="22" height="20" fill="none" stroke="#fff" strokeWidth="1.400">
          <path d="M1 7h3l5-5v16l-5-5H1zM12 7c1 2 1 4 0 6M15 4c3 4 3 8 0 12" />
          <path d="M18 2c4 5 4 11 0 16" stroke="#8d8792" />
        </svg>
      </TrayButton>
      <Language>ENG</Language>
      <Clock>
        3:23 AM
        <br />
        11/28/2021
      </Clock>
      <Notices aria-label="Notifications">
        <svg width="24" height="24" fill="#fff">
          <path fillRule="evenodd" d="M0 0h24v19H14l-4 5v-5H0zM5 4.500v1.500h14V4.500zM5 8.500V10h14V8.500zM5 12.500V14h9v-1.500z" />
        </svg>
        <NoticeCount>4</NoticeCount>
      </Notices>
    </Tray>
    <DesktopEdge />
  </Taskbar>
);

export default function App() {
  return (
    <Screen>
      <GlobalStyle />
      <BrowserChrome />
      <Header />
      <Workspace>
        <Navigation />
        <Report />
        <ScrollThumb />
        <FloatingFeedback aria-label="Feedback">
          <FeedbackIcon s={38} />
        </FloatingFeedback>
      </Workspace>
      <SystemTaskbar />
    </Screen>
  );
}
